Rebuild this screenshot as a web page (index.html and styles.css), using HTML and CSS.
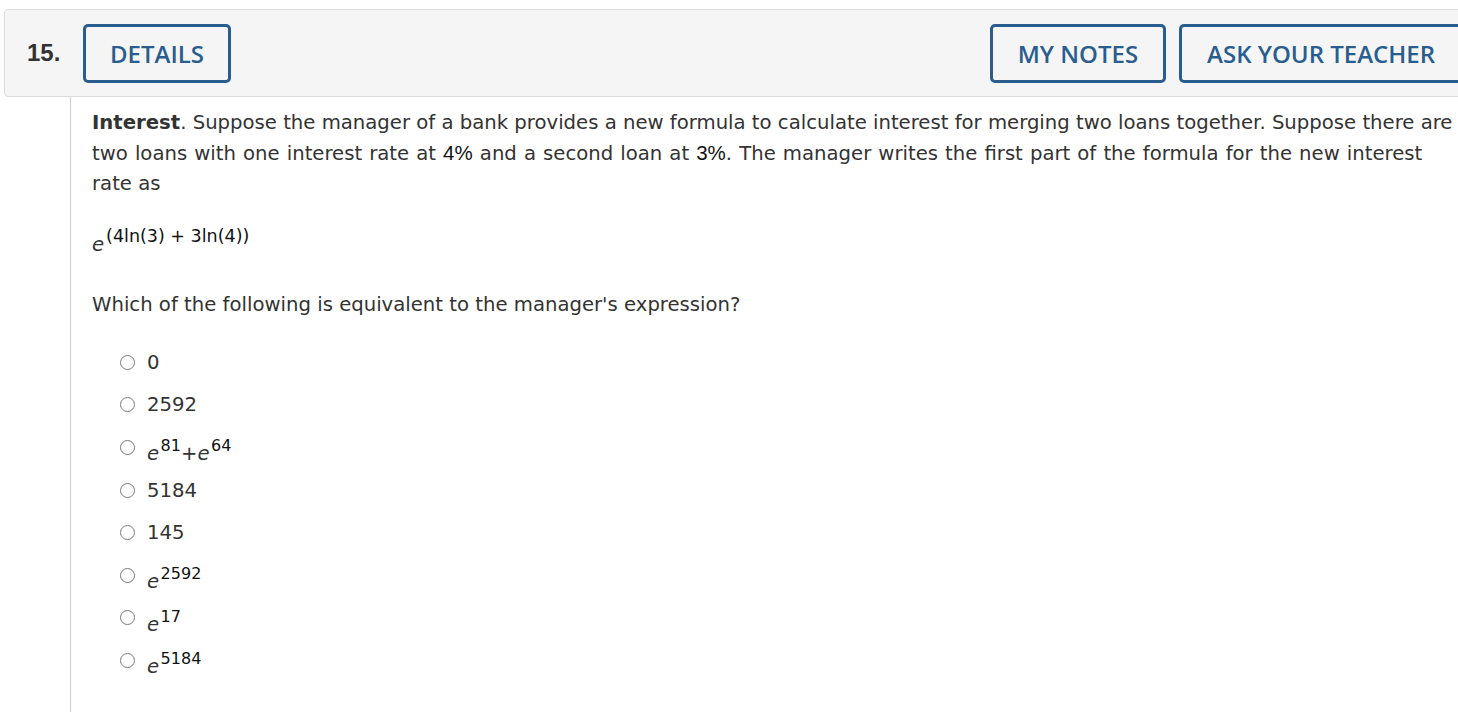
FILE: index.html
```html
<!DOCTYPE html>
<html>
<head>
<meta charset="utf-8">
<link rel="stylesheet" href="styles.css">
</head>
<body>
<div class="page">
  <div class="qhead">
    <span class="qnum">15.</span>
    <button class="btn btn-details">DETAILS</button>
    <div class="spacer"></div>
    <button class="btn btn-notes">MY NOTES</button>
    <button class="btn btn-ask">ASK YOUR TEACHER</button>
  </div>
  <div class="qbody">
    <p class="para"><b>Interest</b>. Suppose the manager of a bank provides a new formula to calculate interest for merging two loans together. Suppose there are <span class="seg">two loans with one interest rate at <span class="num">4%</span> and a second loan at <span class="num">3%</span>. The manager writes the first part of the formula for the new interest rate</span> as</p>
    <p class="formula"><i class="e">e</i><sup class="sup sup-big">(4ln(3) + 3ln(4))</sup></p>
    <p class="para">Which of the following is equivalent to the manager's expression?</p>
    <ul class="opts">
      <li class="opt"><span class="radio"></span><span>0</span></li>
      <li class="opt"><span class="radio"></span><span>2592</span></li>
      <li class="opt"><span class="radio"></span><span class="math"><i class="e">e</i><sup class="sup">81</sup><span class="plus">+</span><i class="e">e</i><sup class="sup">64</sup></span></li>
      <li class="opt"><span class="radio"></span><span>5184</span></li>
      <li class="opt"><span class="radio"></span><span>145</span></li>
      <li class="opt"><span class="radio"></span><span class="math"><i class="e">e</i><sup class="sup">2592</sup></span></li>
      <li class="opt"><span class="radio"></span><span class="math"><i class="e">e</i><sup class="sup">17</sup></span></li>
      <li class="opt"><span class="radio"></span><span class="math"><i class="e">e</i><sup class="sup">5184</sup></span></li>
    </ul>
  </div>
</div>
</body>
</html>
```
FILE: styles.css
```css
html, body {
  margin: 0;
  padding: 0;
  background: #fff;
  overflow: hidden;
}
.page {
  width: 1480px;
  padding: 9px 0 0 4px;
  font-family: "DejaVu Sans", Verdana, sans-serif;
  color: #333;
}
.qhead {
  display: flex;
  align-items: center;
  height: 86px;
  background: #f5f5f5;
  border: 1px solid #ddd;
  border-radius: 4px 0 0 4px;
  padding: 0 20px 0 22px;
}
.qnum {
  font-family: "Liberation Sans", Arial, sans-serif;
  font-weight: bold;
  font-size: 24px;
  color: #333;
  width: 56px;
}
.spacer { flex: 1; }
.btn {
  font-family: "Open Sans", sans-serif;
  font-weight: 600;
  font-size: 24px;
  color: #2a5d8f;
  background: transparent;
  border: 3px solid #2a5d8f;
  border-radius: 5px;
  height: 59px;
  padding: 0 24px;
  margin: 0;
}
.btn-notes { padding: 0 25px; }
.btn-ask { margin-left: 13px; padding: 0 25px; }
.qbody {
  margin-left: 66px;
  border-left: 1px solid #ccc;
  padding: 11px 0 40px 21px;
  min-height: 620px;
}
.para {
  margin: 0;
  width: 1364px;
  font-size: 19.66px;
  line-height: 30px;
}
.seg { word-spacing: 0.85px; }
.num { color: #111; font-family: "Liberation Sans", Arial, sans-serif; font-size: 20.5px; }
.formula {
  margin: 31px 0 30px 0;
  font-size: 19.66px;
  line-height: 30px;
}
.e { font-style: italic; }
.sup {
  font-size: 16px;
  vertical-align: 9px;
  color: #111;
  margin-left: 1.5px;
}
.sup-big {
  font-size: 17.5px;
  line-height: 0;
  margin-left: 2px;
}
.plus { color: #333; }
.opts {
  list-style: none;
  margin: 21px 0 0 0;
  padding: 0 0 0 28px;
}
.opt {
  display: flex;
  align-items: center;
  gap: 12px;
  height: 42.6px;
  font-size: 19.66px;
}
.math { line-height: 22px; padding-top: 6px; }
.radio {
  width: 13px;
  height: 13px;
  border: 1.5px solid #7a7a7a;
  border-radius: 50%;
  background: #fff;
  flex: none;
}
```
